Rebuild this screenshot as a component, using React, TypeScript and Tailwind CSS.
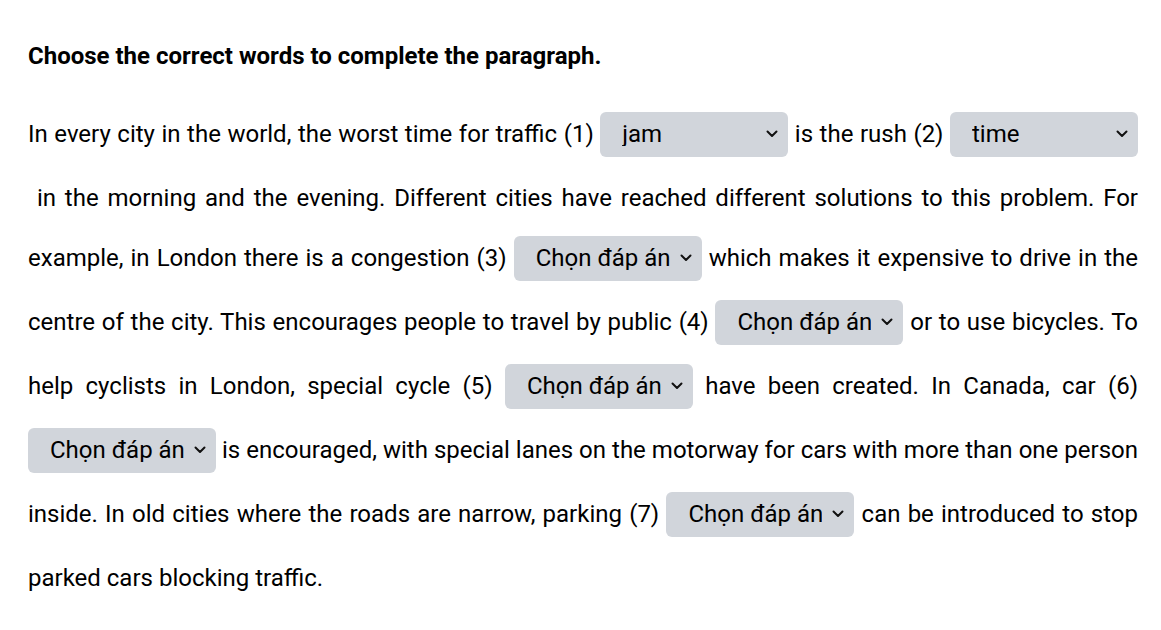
import { useState } from "react";

const OPTIONS: Record<number, string[]> = {
  1: ["jam", "queue", "line"],
  2: ["time", "hour", "period"],
  3: ["charge", "fee", "price"],
  4: ["transport", "traffic", "travel"],
  5: ["lanes", "roads", "ways"],
  6: ["sharing", "pooling", "using"],
  7: ["restrictions", "rules", "limits"],
};

const PLACEHOLDER = "Chọn đáp án";

function Blank({ n, value, onChange }: { n: number; value: string; onChange: (v: string) => void }) {
  return (
    <span className="relative inline-block mb-[11.5px] leading-none align-baseline">
      <select
        value={value}
        onChange={(e) => onChange(e.target.value)}
        className="appearance-none w-[188px] h-[45px] pl-[22px] pr-[32px] rounded-md bg-[#d1d5db] text-black text-[24px] outline-none cursor-pointer"
        style={{ fontFamily: "Roboto, 'Noto Sans', sans-serif" }}
        aria-label={`Blank ${n}`}
      >
        <option value="">{PLACEHOLDER}</option>
        {OPTIONS[n].map((o) => (
          <option key={o} value={o}>
            {o}
          </option>
        ))}
      </select>
      <svg
        className="pointer-events-none absolute right-[10px] top-1/2 -translate-y-1/2 w-[12px] h-[8px]"
        viewBox="0 0 12 8"
        fill="none"
      >
        <path d="M1.5 1.5 6 6 10.5 1.5" stroke="#111" strokeWidth="2" strokeLinecap="round" strokeLinejoin="round" />
      </svg>
    </span>
  );
}

export default function App() {
  const [answers, setAnswers] = useState<Record<number, string>>({
    1: "jam",
    2: "time",
    3: "",
    4: "",
    5: "",
    6: "",
    7: "",
  });

  const blank = (n: number) => (
    <Blank n={n} value={answers[n]} onChange={(v) => setAnswers((a) => ({ ...a, [n]: v }))} />
  );

  return (
    <div
      className="min-h-screen bg-white pl-[28px] pr-[23px] pt-[38px] text-black"
      style={{ fontFamily: "Roboto, 'Noto Sans', sans-serif" }}
    >
      <h2 className="text-[24px] leading-[36px] font-bold mb-[30px]">
        Choose the correct words to complete the paragraph.
      </h2>

      <p className="text-[24px] leading-[60px] text-justify">
        In every city in the world, the worst time for traffic (1) {blank(1)} is the rush (2) {blank(2)}
        {"\u00a0"}in the morning and the evening. Different cities have reached different solutions to this
        problem. For example, in London there is a congestion (3) {blank(3)} which makes it expensive to drive
        in the centre of the city. This encourages people to travel by public (4) {blank(4)} or to use
        bicycles. To help cyclists in London, special cycle (5) {blank(5)} have been created. In Canada, car
        (6) {blank(6)} is encouraged, with special lanes on the motorway for cars with more than one person
        inside. In old cities where the roads are narrow, parking (7) {blank(7)} can be introduced to stop
        parked cars blocking traffic.
      </p>
    </div>
  );
}
